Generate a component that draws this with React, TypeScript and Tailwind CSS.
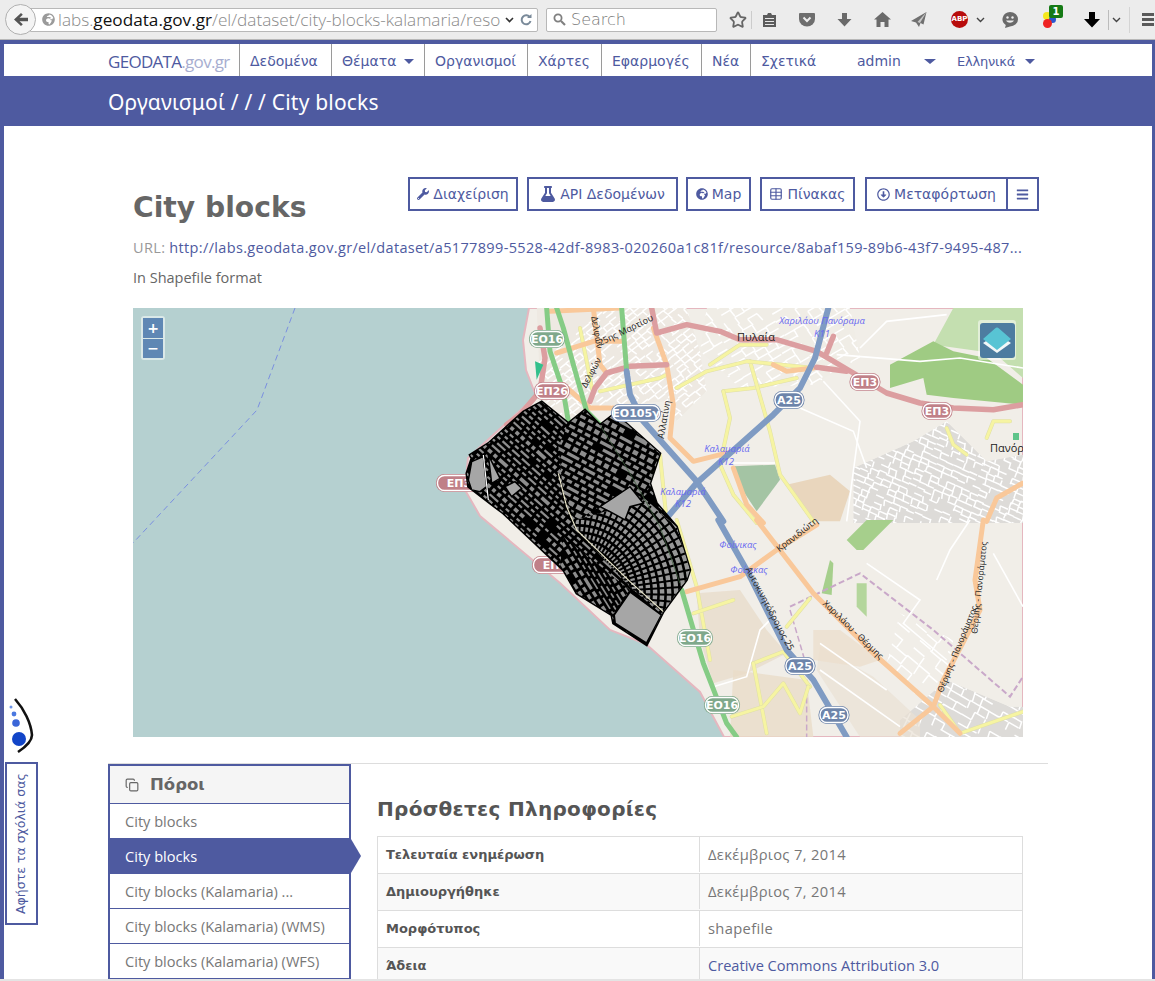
import { FaBars, FaFlask, FaGlobeAfrica, FaRegArrowAltCircleDown, FaWrench } from 'react-icons/fa'
import { Copy, Star, Table } from 'lucide-react'

type Pt = [number, number]

const z4 = (pts: Pt[]) => pts.map(([x, y]) => `${430 + x / 3},${380 + y / 3}`).join(' ')
const z7 = (pts: Pt[]) => pts.map(([x, y]) => `${520 + x / 3},${308 + y / 3}`).join(' ')
const z8 = (pts: Pt[]) => pts.map(([x, y]) => `${600 + x / 3},${520 + y / 3}`).join(' ')

const makeRandom = (seed: number) => {
  let s = seed
  return () => {
    s = (s * 16807) % 2147483647
    return s / 2147483647
  }
}

const outline: Pt[] = [
  [335, 65], [415, 130], [465, 90], [510, 135], [555, 100], [690, 220], [660, 310], [680, 370], [740, 440],
  [780, 570], [770, 600], [700, 695], [650, 795], [550, 730], [545, 705], [440, 640], [400, 570], [220, 400],
  [180, 370], [115, 320], [110, 280], [125, 235], [120, 225], [175, 190], [280, 95],
]

function Road({ points, color, width, casing }: { points: string; color: string; width: number; casing?: string }) {
  return (
    <g fill="none" strokeLinejoin="round" strokeLinecap="round">
      {casing ? <polyline points={points} stroke={casing} strokeWidth={width + 1} /> : null}
      <polyline points={points} stroke={color} strokeWidth={width} />
    </g>
  )
}

function Shield({ x, y, label, color, w }: { x: number; y: number; label: string; color: string; w: number }) {
  return (
    <g>
      <rect x={x - w / 2} y={y - 9} width={w} height={18} rx={8.5} fill={color} />
      <rect x={x - w / 2 + 1.5} y={y - 7.5} width={w - 3} height={15} rx={7} fill="none" stroke="#ffffff" strokeWidth={1.4} />
      <text x={x} y={y + 4} textAnchor="middle" fill="#ffffff" fontSize={11} fontWeight={700} fontFamily="'DejaVu Sans', sans-serif">
        {label}
      </text>
    </g>
  )
}

function RoadName({ x, y, r, label, size = 9 }: { x: number; y: number; r: number; label: string; size?: number }) {
  return (
    <text transform={`translate(${x} ${y}) rotate(${r})`} textAnchor="middle" fontSize={size} fill="#222222" fontFamily="'Open Sans', sans-serif">
      {label}
    </text>
  )
}

function PlaceLabel({ x, y, label }: { x: number; y: number; label: string }) {
  return (
    <text x={x} y={y} textAnchor="middle" fontSize={9.5} fontStyle="italic" fill="#6a6af0" fontFamily="'Open Sans', sans-serif">
      {label}
    </text>
  )
}

// random rotated blocks for the polygon layer
function Cells({ id, points, angle, w, h, seed }: { id: string; points: string; angle: number; w: number; h: number; seed: number }) {
  const random = makeRandom(seed)
  const cells = []
  let y = 510 - 260
  while (y < 510 + 260) {
    const rowH = h + (random() > 0.7 ? 1.5 : 0)
    let x = 600 - 300
    while (x < 600 + 300) {
      const wide = random() > 0.85 ? 2 : 1
      const cw = w * wide + random() * 1.5
      if (random() > 0.06) {
        cells.push(<rect key={`${y}-${x}`} x={x} y={y} width={cw - 3} height={rowH - 2.8} fill="#8e8e8e" />)
      }
      x += cw
    }
    y += rowH
  }
  return (
    <g>
      <clipPath id={id}>
        <polygon points={points} />
      </clipPath>
      <g clipPath={`url(#${id})`}>
        <polygon points={points} fill="#000000" />
        <g transform={`rotate(${angle} 600 510)`}>{cells}</g>
      </g>
    </g>
  )
}

// loose street mesh drawn as short white segments
function Streets({ id, points, angle, step, seed, base }: { id: string; points: string; angle: number; step: number; seed: number; base: string }) {
  const random = makeRandom(seed)
  const d: string[] = []
  for (let i = -45; i < 45; i++) {
    for (let j = -45; j < 45; j++) {
      const x = 800 + i * step * 1.4 + random() * 2
      const y = 500 + j * step + random() * 2
      if (random() > 0.25) d.push(`M${x} ${y}h${step * 1.4}`)
      if (random() > 0.45) d.push(`M${x} ${y}l${random() * 2} ${step}`)
    }
  }
  return (
    <g>
      <clipPath id={id}>
        <polygon points={points} />
      </clipPath>
      <g clipPath={`url(#${id})`}>
        <polygon points={points} fill={base} />
        <path d={d.join('')} transform={`rotate(${angle} 800 500)`} fill="none" stroke="#ffffff" strokeWidth="1.5" />
      </g>
    </g>
  )
}

function Arcs() {
  const cx = 430 + 440 / 3
  const cy = 380 + 640 / 3
  const rings = []
  for (let r = 40; r < 125; r += 7) {
    rings.push(<circle key={r} cx={cx} cy={cy} r={r} fill="none" stroke="#000000" strokeWidth={2.6} />)
  }
  const spokes = []
  for (let a = -100; a < 10; a += 4.2) {
    const t = (a * Math.PI) / 180
    spokes.push(
      <line key={a} x1={cx + 35 * Math.cos(t)} y1={cy + 35 * Math.sin(t)} x2={cx + 130 * Math.cos(t)} y2={cy + 130 * Math.sin(t)} stroke="#000000" strokeWidth={2} />,
    )
  }
  return (
    <g>
      {rings}
      {spokes}
    </g>
  )
}

function MapDrawing() {
  const arcsArea = z4([[440, 420], [640, 360], [740, 440], [790, 570], [700, 695], [610, 630], [430, 440]])
  return (
    <svg viewBox="133 308 890 429" className="block h-full w-full">
      <defs>
        <clipPath id="blocksClip">
          <polygon points={z4(outline)} />
        </clipPath>
        <clipPath id="arcsClip">
          <polygon points={arcsArea} />
        </clipPath>
      </defs>

      <rect x="133" y="308" width="890" height="429" fill="#b5d0d0" />
      <polygon
        points="529,308 1023,308 1023,737 724,737 700,692 646,644 610,630 560,583 480,516 465,490 468,458 536,396 526,370 523,340"
        fill="#f1eee8"
        stroke="#e5b7bf"
        strokeWidth="2"
      />
      <polyline points="295,308 257,410 133,543" fill="none" stroke="#7a8fe0" strokeWidth="1" strokeDasharray="6 4" />

      {/* urban fabric */}
      <Streets id="s1" points={z7([[50, 0], [500, 0], [540, 130], [560, 250], [470, 340], [440, 280], [230, 300], [130, 340], [60, 260]])} angle={-38} step={6} seed={11} base="#eee9e2" />
      <Streets id="s2" points={z7([[560, 0], [990, 0], [1020, 150], [880, 230], [660, 240], [540, 130]])} angle={-30} step={8} seed={23} base="#f0ede6" />
      <Streets id="s3" points={z7([[1000, 480], [1180, 400], [1280, 340], [1400, 460], [1509, 440], [1509, 645], [1000, 645]])} angle={24} step={6} seed={37} base="#dddbd8" />
      <Streets id="s4" points={z8([[1040, 480], [1230, 560], [1269, 560], [1269, 651], [900, 651], [900, 600]])} angle={30} step={8} seed={41} base="#dddbd8" />
      <Streets id="s5" points={z8([[900, 280], [1060, 360], [1040, 460], [960, 540], [860, 430]])} angle={40} step={10} seed={53} base="#f1eee8" />
      <polygon points={z8([[660, 380], [820, 470], [960, 600], [960, 651], [780, 651], [650, 450]])} fill="#e9e1d4" opacity="0.7" />
      <polygon points={z8([[290, 220], [420, 210], [500, 330], [560, 400], [440, 460], [340, 490], [300, 360]])} fill="#e8dccb" opacity="0.8" />
      <polygon points={z8([[400, 450], [620, 480], [640, 651], [390, 651]])} fill="#eadcc8" opacity="0.8" />
      <polygon points={z8([[640, 330], [720, 330], [840, 420], [780, 440], [640, 420]])} fill="#ecdfcd" opacity="0.8" />
      <polygon points={z7([[640, 475], [765, 470], [780, 515], [710, 610], [670, 550]])} fill="#a4c4a4" />
      <polygon points={z7([[800, 530], [930, 500], [990, 550], [960, 640], [880, 640]])} fill="#e9d6bd" />
      <polygon points={z7([[1240, 110], [1300, 0], [1509, 0], [1509, 210], [1440, 150], [1380, 130]])} fill="#c4dfb0" />
      <polygon points={z7([[1110, 170], [1240, 100], [1300, 130], [1400, 150], [1509, 230], [1509, 290], [1300, 270], [1220, 260], [1210, 210], [1110, 240]])} fill="#9fcb83" />
      <polygon points={z8([[740, 60], [800, 0], [880, 0], [790, 90], [770, 90]])} fill="#a6cf8c" />
      <polygon points={z8([[665, 220], [690, 120], [700, 130], [695, 225]])} fill="#a6cf8c" />
      <polygon points={z8([[770, 190], [800, 190], [800, 290], [770, 260]])} fill="#b4d69c" />

      {/* minor white streets */}
      {[
        z7([[840, 300], [1000, 370], [1040, 480]]),
        z7([[910, 220], [1020, 340], [980, 640]]),
        z7([[950, 140], [1200, 160], [1320, 150], [1509, 180]]),
        z7([[1020, 120], [1100, 40], [1280, 20]]),
        z7([[640, 465], [770, 465]]),
        z8([[340, 500], [440, 470], [480, 330], [520, 290]]),
        z8([[660, 370], [860, 510]]),
        z8([[660, 450], [900, 620]]),
        z8([[800, 130], [960, 240], [910, 310], [1040, 420]]),
        z8([[1010, 180], [1050, 90], [1110, 0]]),
        z8([[1180, 100], [1269, 260]]),
      ].map((points) => (
        <polyline key={points} points={points} fill="none" stroke="#ffffff" strokeWidth="1.6" />
      ))}

      <polyline points={z8([[570, 260], [780, 160], [1000, 330], [1230, 530], [1269, 470]])} fill="none" stroke="#c9a8c9" strokeWidth="2" strokeDasharray="6 3" />
      <polyline points={z8([[570, 270], [620, 440], [620, 651]])} fill="none" stroke="#c9a8c9" strokeWidth="1.5" strokeDasharray="6 3" />

      {/* yellow tertiary */}
      {[
        z7([[610, 250], [700, 240], [830, 210]]),
        z7([[610, 250], [630, 330], [600, 470], [640, 560], [710, 645]]),
        z7([[690, 160], [750, 370], [780, 500], [880, 640]]),
        z7([[470, 240], [560, 190], [680, 160], [880, 180]]),
        z7([[570, 170], [660, 110], [740, 110]]),
        z7([[240, 250], [420, 210], [440, 200]]),
        z7([[180, 60], [220, 260]]),
        z7([[420, 440], [440, 640]]),
        z7([[1280, 360], [1300, 410], [1340, 440]]),
        z7([[1400, 390], [1420, 340], [1470, 340]]),
        z8([[230, 0], [290, 200], [330, 420]]),
        z8([[460, 430], [550, 395], [630, 500]]),
        z8([[460, 430], [500, 640]]),
        z8([[395, 590], [490, 560], [550, 490], [600, 580], [625, 500]]),
        z8([[280, 280], [400, 240]]),
        z8([[560, 320], [630, 235]]),
        z8([[1020, 555], [1080, 640], [1269, 575]]),
      ].map((points) => (
        <Road key={points} points={points} color="#f6f4a2" width={3} casing="#dfdfa8" />
      ))}

      {/* orange secondary */}
      {[
        z7([[400, 60], [440, 170], [460, 290], [450, 390], [520, 460], [640, 430]]),
        z7([[640, 480], [680, 590], [730, 645]]),
        z7([[90, 10], [300, 0]]),
        z7([[110, 135], [220, 100], [310, 100]]),
        z7([[220, 0], [240, 170], [260, 195]]),
        z7([[760, 170], [800, 190], [880, 180]]),
        z7([[130, 230], [210, 300], [290, 300]]),
        z7([[1400, 640], [1430, 570], [1509, 525]]),
        z8([[470, 0], [640, 220], [820, 400], [1000, 560], [1080, 640]]),
        z8([[260, 215], [420, 170], [530, 90], [650, 15]]),
        z8([[1000, 560], [1030, 480], [1140, 270], [1125, 180], [1150, 0]]),
        z8([[1000, 560], [900, 640]]),
      ].map((points) => (
        <Road key={points} points={points} color="#f9c89a" width={5} />
      ))}

      {/* pink primary */}
      {[
        z7([[395, 0], [410, 75], [500, 50], [600, 70], [660, 95], [770, 95], [890, 130], [1000, 195], [1100, 255], [1200, 285], [1300, 300], [1420, 305], [1509, 290]]),
        z7([[440, 170], [330, 175], [260, 195], [225, 240], [210, 280]]),
        z7([[890, 178], [980, 190]]),
        z7([[940, 85], [920, 135]]),
        z7([[60, 60], [75, 150], [60, 250], [0, 320], [-40, 350]]),
      ].map((points) => (
        <Road key={points} points={points} color="#dc9ea0" width={5.5} />
      ))}

      {/* green trunk */}
      {[
        z7([[110, 0], [130, 60], [160, 170], [200, 310], [240, 350]]),
        z7([[80, 0], [90, 130], [130, 250], [145, 340]]),
        z7([[305, 0], [320, 190]]),
        z8([[245, 210], [310, 430], [380, 610], [410, 651]]),
      ].map((points) => (
        <Road key={points} points={points} color="#85cc85" width={5} />
      ))}

      {/* blue motorway */}
      {[
        z7([[925, 0], [885, 150], [840, 240], [760, 320], [530, 525], [440, 630]]),
        z7([[320, 190], [330, 260], [370, 340], [530, 520], [610, 640]]),
        z8([[355, 0], [440, 150], [560, 390], [640, 480], [740, 651]]),
      ].map((points) => (
        <Road key={points} points={points} color="#7f9bc3" width={6} />
      ))}

      <polygon points={z7([[45, 160], [70, 170], [50, 215]])} fill="#33c08c" />
      <rect x="1013" y="433" width="6" height="7" fill="#5fc48a" />

      <Shield x={459} y={483} label="ΕΠ3" color="#c08088" w={46} />
      <Shield x={555} y={565} label="ΕΠ3" color="#c08088" w={46} />

      {/* city blocks layer */}
      <polygon points={z4(outline)} fill="#000000" stroke="#000000" strokeWidth="2.5" />
      <g clipPath="url(#blocksClip)">
        <Cells id="c1" points={z4(outline)} angle={42} w={6.5} h={5} seed={7} />
        <Cells id="c2" points={z4([[415, 130], [465, 90], [510, 135], [555, 100], [690, 220], [660, 310], [640, 360], [510, 380], [440, 420], [400, 340], [385, 200]])} angle={28} w={8} h={6} seed={19} />
        <Cells id="c3" points={z4([[400, 470], [600, 630], [545, 705], [440, 640], [390, 560]])} angle={58} w={7.5} h={4.5} seed={29} />
        <polygon points={arcsArea} fill="#979797" />
        <g clipPath="url(#arcsClip)">
          <Arcs />
        </g>
        <polygon points={z4([[115, 300], [125, 245], [160, 230], [170, 320], [150, 335], [125, 330]])} fill="#a6a6a6" stroke="#000000" strokeWidth="1.5" />
        <polygon points={z4([[175, 225], [210, 295], [185, 310]])} fill="#a6a6a6" stroke="#000000" strokeWidth="1.5" />
        <polygon points={z4([[225, 320], [255, 305], [275, 325], [245, 350]])} fill="#a6a6a6" stroke="#000000" strokeWidth="1.5" />
        <polygon points={z4([[510, 380], [600, 320], [640, 370], [600, 380], [585, 420], [540, 395]])} fill="#a6a6a6" stroke="#000000" strokeWidth="1.5" />
        <polygon points={z4([[600, 635], [695, 705], [650, 790], [555, 730], [552, 705]])} fill="#a6a6a6" stroke="#000000" strokeWidth="2" />
        <polyline points={z4([[385, 280], [410, 380], [440, 450], [600, 605], [700, 695]])} fill="none" stroke="#e8e4c8" strokeWidth="1.2" />
        <polyline points={z4([[160, 225], [175, 360]])} fill="none" stroke="#ffffff" strokeWidth="1.2" />
        <polyline points={z4([[510, 135], [600, 280], [690, 440], [750, 610]])} fill="none" stroke="#3f5f3f" strokeWidth="0.8" />
      </g>

      <Shield x={547} y={339} label="ΕΟ16" color="#7fa88b" w={36} />
      <Shield x={552} y={391} label="ΕΠ26" color="#c08088" w={36} />
      <Shield x={636} y={413} label="ΕΟ105γ" color="#7288ad" w={50} />
      <Shield x={789} y={400} label="Α25" color="#6d84aa" w={31} />
      <Shield x={865} y={382} label="ΕΠ3" color="#c08088" w={31} />
      <Shield x={937} y={411} label="ΕΠ3" color="#c08088" w={31} />
      <Shield x={695} y={638} label="ΕΟ16" color="#7fa88b" w={36} />
      <Shield x={800} y={666} label="Α25" color="#6d84aa" w={31} />
      <Shield x={722} y={705} label="ΕΟ16" color="#7fa88b" w={36} />
      <Shield x={834} y={715} label="Α25" color="#6d84aa" w={31} />

      <text x="756" y="341" textAnchor="middle" fontSize="11" fill="#222222" fontFamily="'Open Sans', sans-serif">Πυλαία</text>
      <text x="990" y="452" fontSize="11" fill="#222222" fontFamily="'Open Sans', sans-serif">Πανόρ</text>
      <PlaceLabel x={822} y={324} label="Χαριλάου Πανόραμα" />
      <PlaceLabel x={822} y={337} label="Κ11" />
      <PlaceLabel x={727} y={452} label="Καλαμαριά" />
      <PlaceLabel x={726} y={465} label="Κ12" />
      <PlaceLabel x={683} y={495} label="Καλαμαριά" />
      <PlaceLabel x={683} y={507} label="Κ12" />
      <PlaceLabel x={738} y={548} label="Φοίνικας" />
      <PlaceLabel x={749} y={573} label="Φοίνικας" />

      <RoadName x={594} y={333} r={80} label="Δελφών" />
      <RoadName x={627} y={333} r={-26} label="25ης Μαρτίου" />
      <RoadName x={594} y={374} r={-62} label="Δελφών" />
      <RoadName x={667} y={420} r={-80} label="Αλλατίνη" />
      <RoadName x={799} y={537} r={-38} label="Κρανιδιώτη" />
      <RoadName x={851} y={632} r={44} label="Χαριλάου - Θέρμης" />
      <RoadName x={767} y={610} r={62} label="Αυτοκινητόδρομος 25" />
      <RoadName x={982} y={588} r={-84} label="Θέρμης - Πανοράματος" size={8.5} />
      <RoadName x={960} y={650} r={-68} label="Θέρμης - Πανοράματος" size={8.5} />
    </svg>
  )
}

function NavItem({ label, caret, className }: { label: string; caret?: boolean; className: string }) {
  return (
    <div className={`flex h-full items-center border-l border-[#9a9a9a] pl-[10px] pt-[3px] ${className}`}>
      <span>{label}</span>
      {caret ? <span className="ml-2 h-0 w-0 border-x-[5px] border-t-[5px] border-x-transparent border-t-[#4e5aa0]" /> : null}
    </div>
  )
}

function ActionButton({ children, className }: { children: React.ReactNode; className: string }) {
  return (
    <div className={`flex h-[34px] items-center justify-center gap-1 border-2 border-[#4e5aa0] text-[14px] text-[#4e5aa0] ${className}`}>
      {children}
    </div>
  )
}

function ToolbarIcons() {
  return (
    <div className="ml-[12px] flex h-full shrink-0 items-center text-[#666666]">
      <Star size={18} strokeWidth={2.4} />
      <div className="ml-[4px] h-[18px] w-px bg-[#cccccc]" />
      <svg width="15" height="16" viewBox="0 0 15 16" className="ml-[10px]" fill="#5c5c5c">
        <path d="M1 3h4l1-2h3l1 2h4v12H1z" />
        <path d="M3 6h9v1H3zM3 9h9v1H3zM3 12h9v1H3z" fill="#e8e8e8" />
      </svg>
      <svg width="16" height="15" viewBox="0 0 16 15" className="ml-[22px]">
        <path d="M1 1h14a1 1 0 0 1 1 1v5a8 7.5 0 0 1-16 0V2a1 1 0 0 1 1-1z" fill="#6e6e6e" />
        <path d="M4.5 5.5 8 9l3.5-3.5" fill="none" stroke="#eeeeee" strokeWidth="2" />
      </svg>
      <svg width="15" height="15" viewBox="0 0 15 15" className="ml-[22px]" fill="#6a6a6a">
        <path d="M5 1h5v6h4.5L7.500 14.500.5 7H5z" />
      </svg>
      <svg width="17" height="15" viewBox="0 0 17 15" className="ml-[22px]" fill="#6a6a6a">
        <path d="M8.500 0 17 7.500h-2.500V15h-4v-5h-4v5h-4V7.500H0z" />
      </svg>
      <svg width="16" height="15" viewBox="0 0 16 15" className="ml-[20px]" fill="#707070">
        <path d="M15.500 0 0 9l5 1.500L8 15l1.500-4 3 1.500z" />
        <path d="M15.500 0 6.500 10 9 11z" fill="#c8c8c8" />
      </svg>
      <div className="ml-[24px] flex h-[17px] w-[17px] items-center justify-center rounded-full bg-[#b80c0c] text-[7px] font-bold text-white">ABP</div>
      <svg width="9" height="6" viewBox="0 0 9 6" className="ml-[8px]">
        <path d="M1 1l3.500 3.500L8 1" fill="none" stroke="#444444" strokeWidth="1.4" />
      </svg>
      <svg width="16" height="16" viewBox="0 0 16 16" className="ml-[17px]">
        <path d="M8 0a8 7.200 0 0 1 0 14.400L3 16l.8-3A8 7.200 0 0 1 8 0z" fill="#6a6a6a" />
        <circle cx="5.500" cy="5.500" r="1.200" fill="#eeeeee" />
        <circle cx="10.500" cy="5.500" r="1.200" fill="#eeeeee" />
        <path d="M4 8.500c2 3 6 3 8 0z" fill="#eeeeee" />
      </svg>
      <div className="relative ml-[25px] h-[16px] w-[16px]">
        <span className="absolute left-[0px] top-[0px] h-[8px] w-[8px] rounded-full bg-[#f4e71d]" />
        <span className="absolute left-[6px] top-[4px] h-[7px] w-[7px] rounded-full bg-[#2a56d0]" />
        <span className="absolute left-[0px] top-[7px] h-[9px] w-[9px] rounded-full bg-[#ee2222]" />
        <span className="absolute left-[6px] top-[-7px] flex h-[13px] w-[14px] items-center justify-center rounded-[2px] bg-[#157a15] text-[10px] font-bold text-white">1</span>
      </div>
      <svg width="16" height="17" viewBox="0 0 16 17" className="ml-[25px]" fill="#000000">
        <path d="M5 1h6v7h5l-8 8.500L0 8h5z" />
      </svg>
      <div className="ml-[8px] h-[20px] w-px bg-[#bbbbbb]" />
      <svg width="9" height="6" viewBox="0 0 9 6" className="ml-[3px]">
        <path d="M1 1l3.500 3.500L8 1" fill="none" stroke="#444444" strokeWidth="1.4" />
      </svg>
      <div className="ml-[8px] h-[26px] w-px bg-[#d4d4d4]" />
      <div className="ml-[12px] flex flex-col gap-[2px]">
        <span className="h-[3px] w-[12px] bg-[#5a5a5a]" />
        <span className="h-[3px] w-[12px] bg-[#5a5a5a]" />
        <span className="h-[3px] w-[12px] bg-[#5a5a5a]" />
      </div>
    </div>
  )
}

function Chrome() {
  return (
    <div className="flex h-[40px] shrink-0 items-center overflow-hidden border-b border-[#b8b8b8] bg-[#ececec] pl-[5px]">
      <div className="z-10 flex h-[31px] w-[31px] shrink-0 items-center justify-center rounded-full border border-[#b0b0b0] bg-[#f4f4f4]">
        <svg width="14" height="13" viewBox="0 0 14 13" fill="#555555">
          <path d="M7 0l1.800 1.800L5.500 4.800H14v3.400H5.500l3.300 3L7 13 0 6.500z" />
        </svg>
      </div>
      <div className="-ml-[6px] flex h-[24px] w-[508px] shrink-0 items-center rounded-r-[2px] border border-[#b8b8b8] bg-white pl-[11px] pr-[4px] font-['Open_Sans',sans-serif] text-[17.2px] text-[#8a8a8a]">
        <FaGlobeAfrica size={13} className="shrink-0 text-[#9a9a9a]" />
        <div className="ml-[3px] w-[441px] whitespace-nowrap font-light">
          labs.<span className="font-normal text-[#111111]">geodata.gov.gr</span>/el/dataset/city-blocks-kalamaria/reso
        </div>
        <svg width="9" height="6" viewBox="0 0 9 6" className="ml-[6px] shrink-0">
          <path d="M1 1l3.500 3.500L8 1" fill="none" stroke="#333333" strokeWidth="1.6" />
        </svg>
        <svg width="12" height="12" viewBox="0 0 12 12" className="ml-[6px] shrink-0">
          <path d="M10 3.500A4.500 4.500 0 1 0 10.500 7" fill="none" stroke="#7a8a9a" strokeWidth="2" />
          <path d="M7 4h4.500V0z" fill="#7a8a9a" />
        </svg>
      </div>
      <div className="ml-[8px] flex h-[24px] w-[171px] shrink-0 items-center rounded-[2px] border border-[#b8b8b8] bg-white pl-[6px] text-[16px] font-light text-[#777777]">
        <svg width="13" height="13" viewBox="0 0 13 13" className="mr-[5px]">
          <circle cx="5" cy="5" r="3.600" fill="none" stroke="#808080" strokeWidth="1.800" />
          <path d="M8 8l4 4" stroke="#808080" strokeWidth="2.200" />
        </svg>
        Search
      </div>
      <ToolbarIcons />
    </div>
  )
}

const rows = [
  { label: 'Τελευταία ενημέρωση', value: 'Δεκέμβριος 7, 2014' },
  { label: 'Δημιουργήθηκε', value: 'Δεκέμβριος 7, 2014' },
  { label: 'Μορφότυπος', value: 'shapefile' },
  { label: 'Άδεια', value: 'Creative Commons Attribution 3.0', link: true },
]

const resources = ['City blocks', 'City blocks', 'City blocks (Kalamaria) ...', 'City blocks (Kalamaria) (WMS)', 'City blocks (Kalamaria) (WFS)']

export default function App() {
  return (
    <div className="relative flex h-[981px] w-[1155px] flex-col overflow-hidden bg-white font-['DejaVu_Sans',sans-serif] text-[#666666]">
      <Chrome />
      <main className="min-h-0 flex-1 border-l-4 border-r-[3px] border-t-4 border-[#4e5aa0]">
        <nav className="flex h-[32px] items-center text-[14px] text-[#4e5aa0]">
          <div className="ml-[104px] w-[131px] pt-[3px] font-['Open_Sans',sans-serif] text-[17px] tracking-[-0.7px]">
            GEODATA<span className="text-[#a7aed0]">.gov.gr</span>
          </div>
          <NavItem label="Δεδομένα" className="w-[92px]" />
          <NavItem label="Θέματα" caret className="w-[93px]" />
          <NavItem label="Οργανισμοί" className="w-[103px]" />
          <NavItem label="Χάρτες" className="w-[74px]" />
          <NavItem label="Εφαρμογές" className="w-[100px]" />
          <NavItem label="Νέα" className="w-[49px]" />
          <NavItem label="Σχετικά" className="w-[76px]" />
          <div className="ml-[31px] flex w-[100px] items-center pt-[3px]">
            <span>admin</span>
            <span className="ml-[23px] h-0 w-0 border-x-[6px] border-t-[5px] border-x-transparent border-t-[#4e5aa0]" />
          </div>
          <div className="flex items-center pt-[3px] text-[13px] tracking-[-0.2px]">
            <span>Ελληνικά</span>
            <span className="ml-[10px] h-0 w-0 border-x-[5px] border-t-[5px] border-x-transparent border-t-[#4e5aa0]" />
          </div>
        </nav>
        <div className="flex h-[50px] items-center bg-[#4e5aa0] pl-[104px] pt-[3px] font-['Noto_Sans',sans-serif] text-[21px] tracking-[0.2px] text-white">
          Οργανισμοί / / / City blocks
        </div>

        <section className="pl-[129px] pr-[128px]">
          <div className="flex h-[106px] items-start pt-[51px]">
            <h1 className="mt-[13px] text-[28.2px] font-bold leading-[36px] text-[#666666]">City blocks</h1>
            <div className="-mr-[15px] ml-auto flex">
              <ActionButton className="w-[110px]"><FaWrench size={12} />Διαχείριση</ActionButton>
              <ActionButton className="ml-[9px] w-[151px]"><FaFlask size={16} />API Δεδομένων</ActionButton>
              <ActionButton className="ml-[8px] w-[65px]"><FaGlobeAfrica size={12} />Map</ActionButton>
              <ActionButton className="ml-[9px] w-[95px]"><Table size={14} />Πίνακας</ActionButton>
              <ActionButton className="ml-[10px] w-[143px]"><FaRegArrowAltCircleDown size={13} />Μεταφόρτωση</ActionButton>
              <ActionButton className="-ml-[2px] w-[33px]"><FaBars size={13} /></ActionButton>
            </div>
          </div>
          <div className="mt-[7px] flex h-[18px] items-center whitespace-nowrap font-['Open_Sans',sans-serif] text-[14.5px] tracking-[0.35px]">
            <span className="text-[#999999]">URL:</span>
            <span className="ml-[4px] w-[853px] text-[#4e5aa0]">
              http://labs.geodata.gov.gr/el/dataset/a5177899-5528-42df-8983-020260a1c81f/resource/8abaf159-89b6-43f7-9495-487...
            </span>
          </div>
          <p className="mt-[12px] h-[18px] font-['Open_Sans',sans-serif] text-[14.5px] leading-[18px]">In Shapefile format</p>
          <div className="relative mt-[21px] h-[429px] w-[890px] overflow-hidden">
            <MapDrawing />
            <div className="absolute left-[8px] top-[8px] flex h-[44px] w-[24px] flex-col gap-[1px] rounded-[3px] bg-white/50 p-[2px]">
              <div className="flex h-[20px] items-center justify-center bg-[#5f87b4] text-[14px] font-bold leading-none text-white">+</div>
              <div className="flex h-[20px] items-center justify-center bg-[#5f87b4] text-[14px] font-bold leading-none text-white">−</div>
            </div>
            <div className="absolute left-[845px] top-[12px] flex h-[40px] w-[38px] items-center justify-center rounded-[3px] bg-white/50">
              <div className="flex h-[35px] w-[35px] items-center justify-center rounded-[3px] bg-[#4d7ca0]">
                <svg width="30" height="28" viewBox="0 0 30 28">
                  <path d="M1 17l14 10 14-10-14-9z" fill="#f2f7f8" />
                  <path d="M1 13 13 2.500a3 3 0 0 1 4 0L29 13 15 24z" fill="#58c4d4" />
                </svg>
              </div>
            </div>
          </div>
        </section>

        <div className="ml-[104px] mr-[104px] mt-[26px] flex border-t border-[#dddddd]">
          <aside className="h-[216px] w-[243px] shrink-0 border-2 border-[#4e5aa0]">
            <div className="flex h-[38px] items-center gap-[11px] border-b border-[#4e5aa0] bg-[#f5f5f5] pl-[15px] pt-[1px] text-[16.500px] font-semibold text-[#666666]">
              <Copy size={14} />
              Πόροι
            </div>
            {resources.map((name, i) => (
              <div
                key={`${name}-${i}`}
                className={`relative flex h-[35px] items-center border-b border-[#4e5aa0] pl-[15px] pt-[1px] font-['Open_Sans',sans-serif] text-[14.6px] ${i === 1 ? 'bg-[#4e5aa0] text-white' : 'text-[#777777]'}`}
              >
                {name}
                {i === 1 ? (
                  <span className="absolute -right-[12px] top-0 h-0 w-0 border-y-[17.5px] border-l-[10px] border-y-transparent border-l-[#4e5aa0]" />
                ) : null}
              </div>
            ))}
          </aside>
          <div className="ml-[26px] w-[646px]">
            <h3 className="mt-[32px] text-[20px] font-bold leading-[26px] tracking-[0.3px] text-[#555555]">Πρόσθετες Πληροφορίες</h3>
            <div className="mt-[14px] border-l border-t border-[#dddddd]">
              {rows.map((row, i) => (
                <div key={row.label} className={`flex h-[37px] border-b border-r border-[#dddddd] pb-[1px] text-[13px] ${i % 2 === 1 ? 'bg-[#f9f9f9]' : ''}`}>
                  <div className="flex w-[322px] items-center border-r border-[#dddddd] pl-[8px] font-bold text-[#555555]">{row.label}</div>
                  <div className={`flex items-center pl-[8px] font-['Open_Sans',sans-serif] ${row.link ? 'text-[14.6px] text-[#4e5aa0]' : 'text-[14.7px] tracking-[0.35px] text-[#777777]'}`}>{row.value}</div>
                </div>
              ))}
            </div>
          </div>
        </div>
      </main>

      <div className="absolute left-[8px] top-[698px]">
        <svg width="26" height="58" viewBox="0 0 26 58">
          <path d="M7 1c9 10 16 24 17 36 0 7-8 13-14 17" fill="none" stroke="#111111" strokeWidth="2.6" />
          <circle cx="11" cy="41" r="7" fill="#1245c8" />
          <circle cx="8" cy="25" r="3.800" fill="#3a66d8" />
          <circle cx="6" cy="16" r="2.400" fill="#4a78e0" />
          <circle cx="3" cy="9" r="1.500" fill="#6d94e8" />
        </svg>
      </div>
      <div className="absolute left-[5px] top-[762px] flex h-[163px] w-[33px] rotate-180 items-center justify-center border-2 border-[#4e5aa0] bg-white text-[12.5px] text-[#4e5aa0] [writing-mode:vertical-rl]">
        Αφήστε τα σχόλιά σας
      </div>
      <div className="absolute bottom-0 left-0 h-[2px] w-full bg-[#e4e4e4]" />
    </div>
  )
}
